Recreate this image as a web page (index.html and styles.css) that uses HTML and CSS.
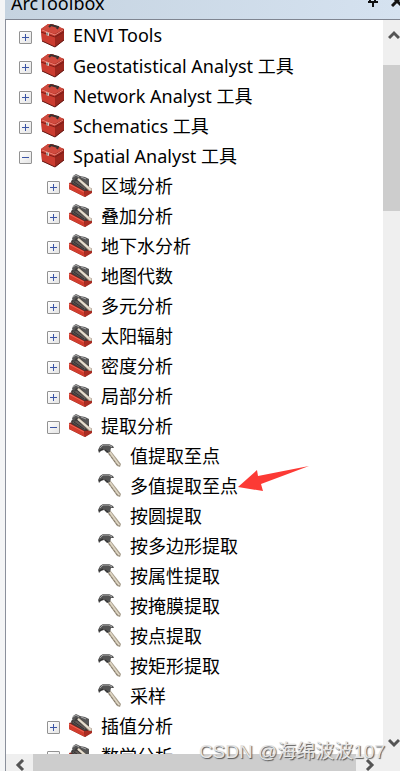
FILE: index.html
```html
<!DOCTYPE html>
<html lang="zh-CN">
<head>
  <meta charset="UTF-8" />
  <title>ArcToolbox</title>
  <meta name="viewport" content="width=device-width, initial-scale=1" />
  <link rel="stylesheet" href="styles.css">
</head>
<body>
  <svg class="sprite" aria-hidden="true">
    <symbol id="toolbox" viewBox="0 0 25 25">
      <path d="M1 6 L8 1 L12 1 L24 6 L24 17 L15 24 L2 18 Z" fill="#a92a20"/>
      <path d="M1 6 L8 1 L12 1 L24 6 L15 11 Z" fill="#cf4a3e"/>
      <path d="M1 6 L15 11 L15 24 L2 18 Z" fill="#cb3c30"/>
      <path d="M15 11 L24 6 L24 17 L15 24 Z" fill="#9c271e"/>
      <path d="M1 9 L15 14 L24 9" fill="none" stroke="#7d1e18" stroke-width="1"/>
      <path d="M2 7 L15 12 L23 7" fill="none" stroke="#ea8579" stroke-width="1"/>
      <path d="M9 4 L11 2 L18 4 L17 6" fill="none" stroke="#38302f" stroke-width="2"/>
      <path d="M6 9 V12 L9 13 V10 Z" fill="#d8d0ca"/>
      <path d="M7 10 V12" stroke="#54413c" stroke-width="1"/>
      <path d="M2 18 L15 24 L24 17" fill="none" stroke="#641a16" stroke-width="1"/>
    </symbol>
    <symbol id="toolset" viewBox="0 0 25 25">
      <path d="M1 10 L8 8 L24 16 L24 19 L17 24 L1 16 Z" fill="#6d2420"/>
      <path d="M3 8 L9 3 L21 10 L21 16 L17 18 L4 11 Z" fill="#3e3c3c"/>
      <path d="M4 6 L5 3 L8 1 L12 3 L17 4 L21 6 L21 12 L17 10 L12 5 L8 5 L6 8 Z" fill="#565656"/>
      <path d="M5 4 L8 2 L11 4 M13 4 L18 6" fill="none" stroke="#aaa" stroke-width="1"/>
      <path d="M9 6 L11 5 L24 16 L24 18 L21 18 Z" fill="#a99d8b"/>
      <path d="M10 6 L23 17" stroke="#e6dfd0" stroke-width="2"/>
      <path d="M4 9 L9 8 L18 15 L16 17 Z" fill="#625a57"/>
      <path d="M6 9 L16 16" stroke="#303030" stroke-width="1"/>
      <path d="M1 10 L16 18 L17 24 L1 16 Z" fill="#d23d2e"/>
      <path d="M16 18 L24 18 L24 20 L17 24 Z" fill="#a92d23"/>
      <path d="M1 11 L16 19" stroke="#ee6757" stroke-width="1"/>
    </symbol>
    <symbol id="hammer" viewBox="0 0 25 25">
      <path d="M10 9 L13 7 L24 21 L23 24 L20 23 Z" fill="#a79d8c"/>
      <path d="M11 8 L13 8 L23 22 L21 22 Z" fill="#e0d7c4"/>
      <path d="M12 11 L21 23" stroke="#817869" stroke-width="1" stroke-dasharray="2 2"/>
      <path d="M1 7 L3 3 L6 1 L12 1 L16 3 L17 5 L14 5 L13 9 L10 10 L7 7 L4 8 L2 10 Z" fill="#555"/>
      <path d="M3 5 L6 2 L12 2 L15 4" fill="none" stroke="#aaa" stroke-width="1"/>
      <path d="M2 8 L6 6 M8 7 L11 9" stroke="#292929" stroke-width="1"/>
    </symbol>
  </svg>

  <main class="panel">
    <header class="title-bar">
      <h1>ArcToolbox</h1>
      <div class="window-buttons">
        <button type="button" aria-label="Pin"><svg width="12" height="18" viewBox="0 0 12 18"><path d="M3 3 V12 M8 3 V12 M1 13 H11 M6 13 V18" stroke="#111" stroke-width="2" fill="none"/></svg></button>
        <button type="button" aria-label="Close"><svg width="12" height="12" viewBox="0 0 12 12"><path d="M1 1 L11 11 M11 1 L1 11" stroke="#111" stroke-width="3" fill="none"/></svg></button>
      </div>
    </header>

    <div class="viewport">
      <ul class="tree">
        <li><div class="row"><button class="toggle" type="button" aria-label="Expand"></button><svg class="icon"><use href="#toolbox"/></svg><span>ENVI Tools</span></div></li>
        <li><div class="row"><button class="toggle" type="button" aria-label="Expand"></button><svg class="icon"><use href="#toolbox"/></svg><span>Geostatistical Analyst 工具</span></div></li>
        <li><div class="row"><button class="toggle" type="button" aria-label="Expand"></button><svg class="icon"><use href="#toolbox"/></svg><span>Network Analyst 工具</span></div></li>
        <li><div class="row"><button class="toggle" type="button" aria-label="Expand"></button><svg class="icon"><use href="#toolbox"/></svg><span>Schematics 工具</span></div></li>
        <li>
          <div class="row"><button class="toggle open" type="button" aria-label="Collapse"></button><svg class="icon"><use href="#toolbox"/></svg><span>Spatial Analyst 工具</span></div>
          <ul>
            <li><div class="row"><button class="toggle" type="button" aria-label="Expand"></button><svg class="icon"><use href="#toolset"/></svg><span>区域分析</span></div></li>
            <li><div class="row"><button class="toggle" type="button" aria-label="Expand"></button><svg class="icon"><use href="#toolset"/></svg><span>叠加分析</span></div></li>
            <li><div class="row"><button class="toggle" type="button" aria-label="Expand"></button><svg class="icon"><use href="#toolset"/></svg><span>地下水分析</span></div></li>
            <li><div class="row"><button class="toggle" type="button" aria-label="Expand"></button><svg class="icon"><use href="#toolset"/></svg><span>地图代数</span></div></li>
            <li><div class="row"><button class="toggle" type="button" aria-label="Expand"></button><svg class="icon"><use href="#toolset"/></svg><span>多元分析</span></div></li>
            <li><div class="row"><button class="toggle" type="button" aria-label="Expand"></button><svg class="icon"><use href="#toolset"/></svg><span>太阳辐射</span></div></li>
            <li><div class="row"><button class="toggle" type="button" aria-label="Expand"></button><svg class="icon"><use href="#toolset"/></svg><span>密度分析</span></div></li>
            <li><div class="row"><button class="toggle" type="button" aria-label="Expand"></button><svg class="icon"><use href="#toolset"/></svg><span>局部分析</span></div></li>
            <li>
              <div class="row"><button class="toggle open" type="button" aria-label="Collapse"></button><svg class="icon"><use href="#toolset"/></svg><span>提取分析</span></div>
              <ul class="tools">
                <li class="row"><svg class="icon"><use href="#hammer"/></svg><span>值提取至点</span></li>
                <li class="row"><svg class="icon"><use href="#hammer"/></svg><span class="marked">多值提取至点<svg class="arrow" viewBox="0 0 72 26"><path d="M0 21 L19 4 L20 10 L71 0 L23 18 L25 25 Z" fill="#fc3a35"/></svg></span></li>
                <li class="row"><svg class="icon"><use href="#hammer"/></svg><span>按圆提取</span></li>
                <li class="row"><svg class="icon"><use href="#hammer"/></svg><span>按多边形提取</span></li>
                <li class="row"><svg class="icon"><use href="#hammer"/></svg><span>按属性提取</span></li>
                <li class="row"><svg class="icon"><use href="#hammer"/></svg><span>按掩膜提取</span></li>
                <li class="row"><svg class="icon"><use href="#hammer"/></svg><span>按点提取</span></li>
                <li class="row"><svg class="icon"><use href="#hammer"/></svg><span>按矩形提取</span></li>
                <li class="row"><svg class="icon"><use href="#hammer"/></svg><span>采样</span></li>
              </ul>
            </li>
            <li><div class="row"><button class="toggle" type="button" aria-label="Expand"></button><svg class="icon"><use href="#toolset"/></svg><span>插值分析</span></div></li>
            <li><div class="row"><button class="toggle" type="button" aria-label="Expand"></button><svg class="icon"><use href="#toolset"/></svg><span>数学分析</span></div></li>
          </ul>
        </li>
      </ul>

      <div class="scroll-y">
        <button type="button" aria-label="Scroll up"><svg width="12" height="10" viewBox="0 0 12 10"><path d="M1 8 L6 3 L11 8" fill="none" stroke="#555" stroke-width="3"/></svg></button>
        <div class="track"><div class="thumb"></div></div>
        <button type="button" aria-label="Scroll down"><svg width="12" height="10" viewBox="0 0 12 10"><path d="M1 2 L6 7 L11 2" fill="none" stroke="#555" stroke-width="3"/></svg></button>
      </div>

      <div class="scroll-x">
        <button type="button" aria-label="Scroll left"><svg width="10" height="12" viewBox="0 0 10 12"><path d="M8 1 L3 6 L8 11" fill="none" stroke="#555" stroke-width="3"/></svg></button>
        <div class="thumb"></div>
        <button type="button" aria-label="Scroll right"><svg width="10" height="12" viewBox="0 0 10 12"><path d="M2 1 L7 6 L2 11" fill="none" stroke="#555" stroke-width="3"/></svg></button>
      </div>
    </div>
  </main>
  <div class="watermark">CSDN @海绵波波107</div>
</body>
</html>
```
FILE: styles.css
```css
* {
  box-sizing: border-box;
}
body {
  margin: 0;
  height: 100vh;
  overflow: hidden;
  position: relative;
  background: #f4f5f6;
  color: #000;
  font-family: "Noto Sans", "Noto Sans CJK SC", sans-serif;
  font-size: 18px;
}
ul {
  list-style: none;
  margin: 0;
  padding: 0;
}
button {
  padding: 0;
  border: none;
  background: none;
  cursor: pointer;
}
.sprite {
  display: none;
}
.panel {
  display: flex;
  flex-direction: column;
  height: 100%;
  padding-left: 5px;
}
.title-bar {
  display: flex;
  justify-content: space-between;
  align-items: flex-end;
  flex: none;
  height: 19px;
  padding: 0 0 4px 6px;
  overflow: hidden;
  background: linear-gradient(90deg, #c5d3e0, #d5e2f0);
}
.title-bar h1 {
  margin: 0;
  font-size: 18px;
  font-weight: normal;
  line-height: 24px;
}
.window-buttons {
  display: flex;
  align-items: flex-end;
  gap: 12px;
  margin-right: -3px;
  padding-bottom: 8px;
}
.window-buttons button {
  display: flex;
}
.viewport {
  display: grid;
  grid-template-columns: 1fr 17px;
  grid-template-rows: 1fr 17px;
  flex: 1;
  min-height: 0;
  border-top: 1px solid #7f8591;
  border-left: 1px solid #8b909b;
  background: #fff;
}
.tree {
  min-height: 0;
  overflow: hidden;
  padding-left: 13px;
}
.tree ul {
  padding-left: 28px;
}
.row {
  display: flex;
  align-items: center;
  height: 30px;
  white-space: nowrap;
}
.toggle {
  flex: none;
  width: 13px;
  height: 13px;
  margin: 4px 8px 0 0;
  border: 1px solid #929292;
  border-radius: 1px;
  background:
    linear-gradient(#3c55a5, #3c55a5) center / 7px 1px no-repeat,
    linear-gradient(#3c55a5, #3c55a5) center / 1px 7px no-repeat,
    linear-gradient(135deg, #fff, #e4e4e4);
}
.toggle.open {
  background:
    linear-gradient(#3c55a5, #3c55a5) center / 7px 1px no-repeat,
    linear-gradient(135deg, #fff, #e4e4e4);
}
.icon {
  flex: none;
  width: 25px;
  height: 25px;
  margin-right: 8px;
}
.tree .tools {
  padding-left: 50px;
}
.marked {
  position: relative;
}
.arrow {
  position: absolute;
  left: 100%;
  top: 50%;
  width: 72px;
  height: 26px;
  margin-top: -19px;
}
.scroll-y {
  grid-row: 1 / 3;
  grid-column: 2;
  display: flex;
  flex-direction: column;
  background: #efefef;
}
.scroll-y button {
  display: flex;
  justify-content: flex-end;
  align-items: center;
  height: 29px;
}
.scroll-y button:last-child {
  margin-bottom: 14px;
}
.track {
  flex: 1;
  padding-top: 16px;
}
.scroll-y .thumb {
  height: 22%;
  background: #cdcdcd;
}
.scroll-x {
  display: flex;
  background: #efefef;
}
.scroll-x button {
  flex: none;
  display: flex;
  justify-content: center;
  align-items: flex-end;
  width: 27px;
}
.scroll-x .thumb {
  flex: 1;
  background: #cdcdcd;
}
.watermark {
  position: absolute;
  right: 15px;
  bottom: 6px;
  font-family: "Liberation Sans", "Noto Sans CJK SC", sans-serif;
  font-size: 19px;
  line-height: 26px;
  color: #e4e4e4;
  text-shadow: 1px 1px 1px #555;
}
```
